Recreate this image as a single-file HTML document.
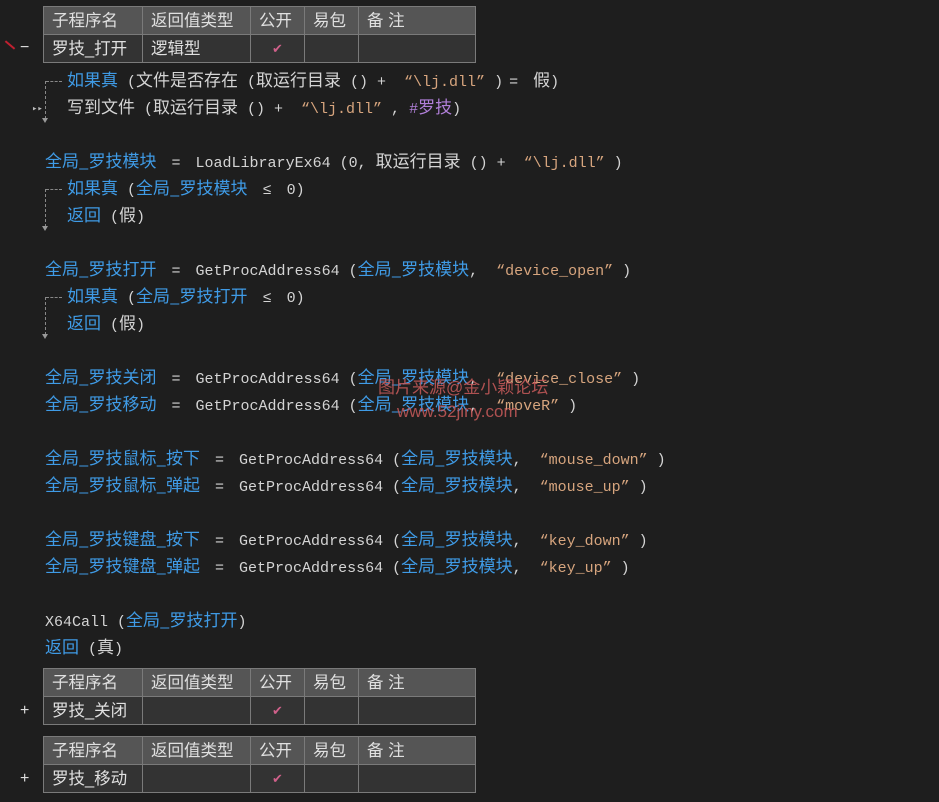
<!DOCTYPE html>
<html><head><meta charset="utf-8"><style>
body{margin:0;width:939px;height:802px;background:#1e1e1e;overflow:hidden;position:relative;font-family:"Liberation Mono","Noto Sans CJK SC",monospace;font-size:15px;color:#d4d4d4}
.l{position:absolute;white-space:pre;line-height:20px;margin-top:-2px}
i{font-style:normal;font-family:"Noto Sans CJK SC",sans-serif;font-size:17px}
.e{margin:0 6px}
.b{color:#3f9be6}.s{color:#d7a57e}.p{color:#b07fd8}
table{position:absolute;left:43px;border-collapse:collapse;font-family:"Liberation Sans","Noto Sans CJK SC",sans-serif;font-size:16.5px;color:#e0e0e0}
td{border:1px solid #7a7a7a;height:28px;padding:0 0 0 8px;box-sizing:border-box;line-height:26px}
tr.h td{background:#555}
tr.r td{background:#333}
.ck{color:#d0608a;text-align:center;padding:0;font-size:13px}
.v{position:absolute;border-left:1px dashed #888;width:0}
.hz{position:absolute;border-top:1px dashed #888;height:0}
.ar{position:absolute;width:0;height:0;border-left:3px solid transparent;border-right:3px solid transparent;border-top:5px solid #999}
.pm{position:absolute;color:#ddd;font-family:"Liberation Sans",sans-serif;font-size:16px}
</style></head><body>
<table style="top:6px"><colgroup><col style="width:99px"><col style="width:108px"><col style="width:54px"><col style="width:54px"><col style="width:117px"></colgroup>
<tr class="h"><td>子程序名</td><td>返回值类型</td><td>公开</td><td>易包</td><td>备 注</td></tr>
<tr class="r"><td>罗技_打开</td><td>逻辑型</td><td class="ck">✔</td><td></td><td></td></tr></table>
<div style="position:absolute;left:4px;top:44px;width:12px;height:2px;background:#c02030;transform:rotate(40deg)"></div>
<div class="pm" style="left:20px;top:39px">−</div>

<div class="v" style="left:45px;top:81px;height:38px"></div><div class="hz" style="left:46px;top:81px;width:16px"></div><div class="ar" style="left:42px;top:118px"></div>
<div style="position:absolute;left:32px;top:104px;color:#bbb;font-size:9px">▸▸</div>
<div class="l" style="left:67px;top:71px"><i class="b">如果真</i> (<i>文件是否存在</i> (<i>取运行目录</i> () +  <span class="s">“\lj.dll”</span> )<span class="e">=</span> <i>假</i>)</div>
<div class="l" style="left:67px;top:98px"><i>写到文件</i> (<i>取运行目录</i> () +  <span class="s">“\lj.dll”</span> , <span class="p">#<i>罗技</i></span>)</div>

<div class="l" style="left:45px;top:152px"><i class="b">全局_罗技模块</i> <span class="e">=</span> LoadLibraryEx64 (0, <i>取运行目录</i> () +  <span class="s">“\lj.dll”</span> )</div>
<div class="v" style="left:45px;top:189px;height:38px"></div><div class="hz" style="left:46px;top:189px;width:16px"></div><div class="ar" style="left:42px;top:226px"></div>
<div class="l" style="left:67px;top:179px"><i class="b">如果真</i> (<i class="b">全局_罗技模块</i> <span class="e">≤</span> 0)</div>
<div class="l" style="left:67px;top:206px"><i class="b">返回</i> (<i>假</i>)</div>

<div class="l" style="left:45px;top:260px"><i class="b">全局_罗技打开</i> <span class="e">=</span> GetProcAddress64 (<i class="b">全局_罗技模块</i>,  <span class="s">“device_open”</span> )</div>
<div class="v" style="left:45px;top:297px;height:38px"></div><div class="hz" style="left:46px;top:297px;width:16px"></div><div class="ar" style="left:42px;top:334px"></div>
<div class="l" style="left:67px;top:287px"><i class="b">如果真</i> (<i class="b">全局_罗技打开</i> <span class="e">≤</span> 0)</div>
<div class="l" style="left:67px;top:314px"><i class="b">返回</i> (<i>假</i>)</div>

<div class="l" style="left:45px;top:368px"><i class="b">全局_罗技关闭</i> <span class="e">=</span> GetProcAddress64 (<i class="b">全局_罗技模块</i>,  <span class="s">“device_close”</span> )</div>
<div class="l" style="left:45px;top:395px"><i class="b">全局_罗技移动</i> <span class="e">=</span> GetProcAddress64 (<i class="b">全局_罗技模块</i>,  <span class="s">“moveR”</span> )</div>
<div class="l" style="left:378px;top:380px;color:#c85a5a;font-family:'Liberation Sans','Noto Sans CJK SC',sans-serif;font-size:17px;opacity:.85">图片来源@金小颖论坛</div>
<div class="l" style="left:397px;top:404px;color:#c85a5a;font-family:'Liberation Sans',sans-serif;font-size:17px;opacity:.85">www.52jiny.com</div>

<div class="l" style="left:45px;top:449px"><i class="b">全局_罗技鼠标_按下</i> <span class="e">=</span> GetProcAddress64 (<i class="b">全局_罗技模块</i>,  <span class="s">“mouse_down”</span> )</div>
<div class="l" style="left:45px;top:476px"><i class="b">全局_罗技鼠标_弹起</i> <span class="e">=</span> GetProcAddress64 (<i class="b">全局_罗技模块</i>,  <span class="s">“mouse_up”</span> )</div>
<div class="l" style="left:45px;top:530px"><i class="b">全局_罗技键盘_按下</i> <span class="e">=</span> GetProcAddress64 (<i class="b">全局_罗技模块</i>,  <span class="s">“key_down”</span> )</div>
<div class="l" style="left:45px;top:557px"><i class="b">全局_罗技键盘_弹起</i> <span class="e">=</span> GetProcAddress64 (<i class="b">全局_罗技模块</i>,  <span class="s">“key_up”</span> )</div>

<div class="l" style="left:45px;top:611px">X64Call (<i class="b">全局_罗技打开</i>)</div>
<div class="l" style="left:45px;top:638px"><i class="b">返回</i> (<i>真</i>)</div>

<table style="top:668px"><colgroup><col style="width:99px"><col style="width:108px"><col style="width:54px"><col style="width:54px"><col style="width:117px"></colgroup>
<tr class="h"><td>子程序名</td><td>返回值类型</td><td>公开</td><td>易包</td><td>备 注</td></tr>
<tr class="r"><td>罗技_关闭</td><td></td><td class="ck">✔</td><td></td><td></td></tr></table>
<div class="pm" style="left:20px;top:702px">+</div>
<table style="top:736px"><colgroup><col style="width:99px"><col style="width:108px"><col style="width:54px"><col style="width:54px"><col style="width:117px"></colgroup>
<tr class="h"><td>子程序名</td><td>返回值类型</td><td>公开</td><td>易包</td><td>备 注</td></tr>
<tr class="r"><td>罗技_移动</td><td></td><td class="ck">✔</td><td></td><td></td></tr></table>
<div class="pm" style="left:20px;top:770px">+</div>
</body></html>
